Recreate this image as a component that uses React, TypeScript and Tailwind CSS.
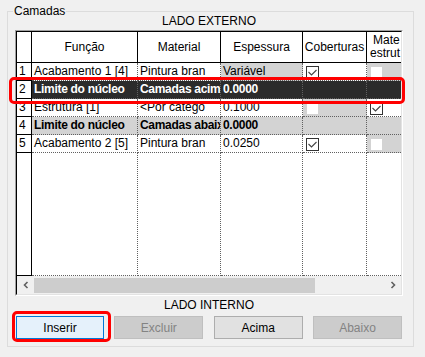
import React from "react";

type Flag = "checked" | "off" | "none";

type Row = {
    n: string;
    funcao: string;
    material: string;
    espessura: string;
    kind: "normal" | "selected" | "core";
    grayEsp?: boolean;
    cob: Flag;
    est: Flag;
};

const rows: Row[] = [
    { n: "1", funcao: "Acabamento 1 [4]", material: "Pintura bran", espessura: "Variável", kind: "normal", grayEsp: true, cob: "checked", est: "off" },
    { n: "2", funcao: "Limite do núcleo", material: "Camadas acim", espessura: "0.0000", kind: "selected", cob: "none", est: "none" },
    { n: "3", funcao: "Estrutura [1]", material: "<Por catego", espessura: "0.1000", kind: "normal", cob: "off", est: "checked" },
    { n: "4", funcao: "Limite do núcleo", material: "Camadas abaix", espessura: "0.0000", kind: "core", cob: "none", est: "none" },
    { n: "5", funcao: "Acabamento 2 [5]", material: "Pintura bran", espessura: "0.0250", kind: "normal", cob: "checked", est: "off" },
];

function Box({ flag }: { flag: Flag }) {
    if (flag === "checked") {
        return (
            <span className="block h-[13px] w-[13px] border border-[#333333] bg-white">
                <svg viewBox="0 0 11 11" className="block h-[11px] w-[11px]">
                    <polyline points="1.5,5 4.5,8 9.5,3" fill="none" stroke="#444444" strokeWidth="1.1" />
                </svg>
            </span>
        );
    }
    if (flag === "off") {
        return <span className="m-[1px] block h-[11px] w-[11px] bg-white" />;
    }
    return null;
}

function cellBg(row: Row, gray: boolean) {
    if (row.kind === "selected") return "bg-[#2b2b2b] text-white font-bold tracking-[-0.3px]";
    if (row.kind === "core") return "bg-[#d3d3d3] font-bold tracking-[-0.3px]";
    return gray ? "bg-[#d3d3d3]" : "bg-white";
}

const dotted = "border-r border-b border-dotted border-[#606060]";

export default function App() {
    return (
        <div className="relative h-[357px] w-[425px] overflow-hidden bg-[#f0f0f0] pl-[7px] pt-[11px] font-['Liberation_Sans',Arial,sans-serif] text-[12px] text-black">
            <div className="relative h-[336px] w-[407px] border border-[#dcdcdc] pl-[7px] pt-[1px]">
                <span className="absolute left-[5px] top-[-9px] bg-[#f0f0f0] px-[1px] leading-[16px]">Camadas</span>

                <div className="h-[17px] w-[388px] text-center leading-[17px]">LADO EXTERNO</div>

                {/* grid frame */}
                <div className="h-[266px] w-[388px] border border-b-white border-l-[#a0a0a0] border-r-white border-t-[#a0a0a0]">
                    <div className="flex h-full flex-col border border-b-[#e3e3e3] border-l-black border-r-[#e3e3e3] border-t-black bg-white">
                        {/* header */}
                        <div className="flex h-[31px] border-b border-black">
                            <div className="w-[15px] border-r border-black" />
                            <div className="flex w-[106px] items-center justify-center border-r border-black">Função</div>
                            <div className="flex w-[83px] items-center justify-center border-r border-black">Material</div>
                            <div className="flex w-[82px] items-center justify-center border-r border-black">Espessura</div>
                            <div className="flex w-[64px] items-center justify-center overflow-hidden whitespace-nowrap border-r border-black">Coberturas</div>
                            <div className="flex w-[34px] flex-col justify-center overflow-hidden whitespace-nowrap leading-[13px]">
                                <span className="pl-[6px]">Mate</span>
                                <span className="pl-[3px]">estrut</span>
                            </div>
                        </div>

                        {rows.map((row) => (
                            <div key={row.n} className="flex h-[18px] leading-[17px]">
                                <div className="w-[15px] border-b border-r border-black bg-white pl-[2px]">{row.n}</div>
                                <div className={`w-[106px] overflow-hidden whitespace-nowrap pl-[2px] ${dotted} ${cellBg(row, false)}`}>{row.funcao}</div>
                                <div className={`w-[83px] overflow-hidden whitespace-nowrap pl-[2px] ${dotted} ${cellBg(row, false)}`}>{row.material}</div>
                                <div className={`w-[82px] overflow-hidden whitespace-nowrap pl-[2px] ${dotted} ${cellBg(row, !!row.grayEsp)}`}>{row.espessura}</div>
                                <div className={`w-[64px] pl-[3px] pt-[3px] ${dotted} ${cellBg(row, row.cob === "off")}`}>
                                    <Box flag={row.cob} />
                                </div>
                                <div className={`w-[34px] border-b border-dotted border-[#606060] pl-[3px] pt-[3px] ${cellBg(row, row.est === "off")}`}>
                                    <Box flag={row.est} />
                                </div>
                            </div>
                        ))}

                        {/* empty area */}
                        <div className="flex flex-1">
                            <div className="w-[15px] border-b border-r border-black" />
                            <div className={`w-[106px] ${dotted}`} />
                            <div className={`w-[83px] ${dotted}`} />
                            <div className={`w-[82px] ${dotted}`} />
                            <div className={`w-[64px] ${dotted}`} />
                            <div className="w-[34px] border-b border-dotted border-[#606060]" />
                        </div>

                        {/* horizontal scrollbar */}
                        <div className="flex h-[18px] bg-[#f0f0f0]">
                            <div className="flex w-[17px] items-center justify-center">
                                <svg viewBox="0 0 8 8" className="h-[8px] w-[8px]">
                                    <polyline points="5.5,1 2.5,4 5.5,7" fill="none" stroke="#606060" strokeWidth="1.6" />
                                </svg>
                            </div>
                            <div className="flex-1 pb-[1px] pt-[2px]">
                                <div className="h-full w-[281px] bg-[#cdcdcd]" />
                            </div>
                            <div className="flex w-[17px] items-center justify-center">
                                <svg viewBox="0 0 8 8" className="h-[8px] w-[8px]">
                                    <polyline points="2.5,1 5.5,4 2.5,7" fill="none" stroke="#606060" strokeWidth="1.6" />
                                </svg>
                            </div>
                        </div>
                    </div>
                </div>

                <div className="mt-[1px] h-[16px] w-[388px] text-center leading-[16px]">LADO INTERNO</div>

                <div className="ml-[1px] mt-[3px] flex w-[386px] justify-between">
                    <button className="h-[23px] w-[88px] border border-[#0078d7] bg-[#e5f1fb]">Inserir</button>
                    <button className="h-[23px] w-[89px] border border-[#bfbfbf] bg-[#cccccc] text-[#838383]">Excluir</button>
                    <button className="h-[23px] w-[89px] border border-[#adadad] bg-[#e1e1e1]">Acima</button>
                    <button className="h-[23px] w-[89px] border border-[#bfbfbf] bg-[#cccccc] text-[#838383]">Abaixo</button>
                </div>
            </div>

            {/* red highlights */}
            <div className="absolute left-[9px] top-[77px] h-[27px] w-[396px] rounded-[5px] border-[3px] border-[#ff0000]" />
            <div className="absolute left-[12px] top-[311px] h-[31px] w-[99px] rounded-[5px] border-[3px] border-[#ff0000]" />
        </div>
    );
}
